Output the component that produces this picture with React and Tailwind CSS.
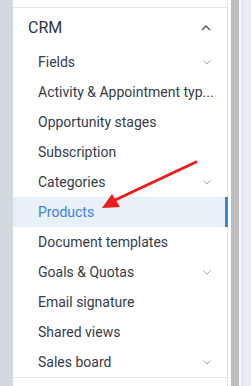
import React from 'react'

const items = [
  { label: 'Fields', chevron: true },
  { label: 'Activity & Appointment typ...', chevron: false },
  { label: 'Opportunity stages' },
  { label: 'Subscription' },
  { label: 'Categories', chevron: true },
  { label: 'Products', active: true },
  { label: 'Document templates' },
  { label: 'Goals & Quotas', chevron: true },
  { label: 'Email signature' },
  { label: 'Shared views' },
  { label: 'Sales board', chevron: true },
]

const ChevronDown = () => (
  <svg width="8" height="5" viewBox="0 0 8 5" fill="none" className="shrink-0">
    <polyline points="0.5,0.5 4,4 7.5,0.5" stroke="#9aa1ab" strokeWidth="1" />
  </svg>
)

const ChevronUp = () => (
  <svg width="10" height="6" viewBox="0 0 10 6" fill="none" className="shrink-0">
    <polyline points="1,5 5,1 9,5" stroke="#4b5260" strokeWidth="1.3" />
  </svg>
)

const App = () => {
  return (
    <div className="relative flex w-[251px] h-[386px] overflow-hidden bg-[#d1d9e1] font-['Roboto',sans-serif]">
      <div className="w-[13px] shrink-0" />
      <div className="w-[215px] shrink-0 bg-white border-r border-[#e3e5e8] pt-[7px]">
        <div className="border-t border-[#e3e5e8] border-b">
          <div className="flex items-center justify-between h-[39px] pl-[15px] pr-[16px]">
            <span className="text-[16px] text-[#2f3540]">CRM</span>
            <ChevronUp />
          </div>
          {items.map((item) => (
            <div
              key={item.label}
              className={
                item.active
                  ? 'flex items-center justify-between h-[30px] pl-[25px] pr-[16px] bg-[#e8f0f8] border-r-[3px] border-[#3b87e0] mr-[-1px]'
                  : 'flex items-center justify-between h-[30px] pl-[25px] pr-[12px]'
              }
            >
              <span
                className={
                  item.active
                    ? 'text-[14px] text-[#3b82d6] whitespace-nowrap'
                    : 'text-[14px] text-[#363c47] whitespace-nowrap'
                }
              >
                {item.label}
              </span>
              {item.chevron && (
                <span className="pr-[4px] flex">
                  <ChevronDown />
                </span>
              )}
            </div>
          ))}
        </div>
      </div>
      <div className="w-[3px] shrink-0 bg-white" />
      <div className="w-[8px] shrink-0 bg-[#bdbdbd]" />
      <div className="w-[3px] shrink-0 bg-[#f2f2f2]" />
      <div className="flex-1 bg-[#e9eef5] border-l border-[#d6e0ee]" />
      <svg className="absolute left-0 top-0" width="251" height="386" viewBox="0 0 251 386">
        <line x1="196" y1="162" x2="113" y2="201" stroke="#ee1c1c" strokeWidth="3" strokeLinecap="round" />
        <polygon points="102,208 112,194 120,207" fill="#ee1c1c" />
      </svg>
    </div>
  )
}

export default App
